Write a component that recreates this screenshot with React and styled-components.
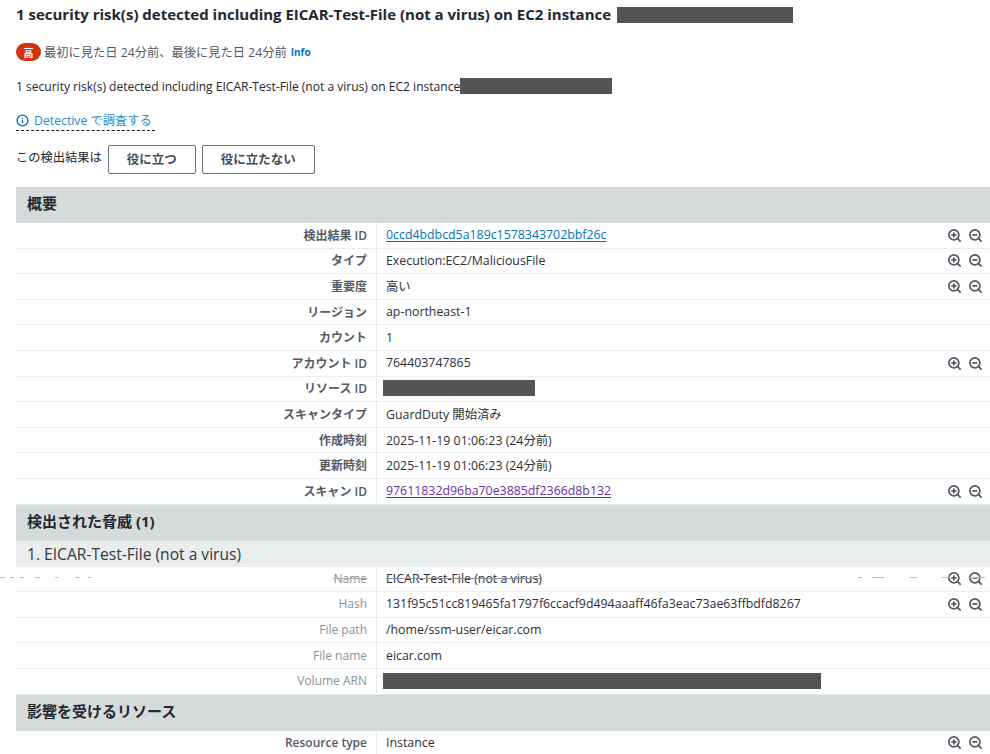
import styled, { createGlobalStyle } from "styled-components";
import { ZoomIn, ZoomOut, Info } from "lucide-react";

const GlobalStyle = createGlobalStyle`
  html, body {
    margin: 0;
    height: 754px;
    overflow: hidden;
    background: #fff;
  }
  body {
    font-family: "Open Sans", "Noto Sans CJK JP", sans-serif;
    color: #16191f;
  }
`;

const Page = styled.div`
  width: 990px;
  height: 754px;
  padding-left: 16px;
  box-sizing: border-box;
  overflow: hidden;
  position: relative;
`;

const Title = styled.h1`
  margin: 0;
  height: 29px;
  box-sizing: border-box;
  font-size: 15px;
  line-height: 19px;
  font-weight: 700;
  color: #232730;
  display: flex;
  align-items: center;
  gap: 6px;
  white-space: nowrap;
`;

const Redacted = styled.span`
  display: inline-block;
  width: ${(p) => p.$w}px;
  height: 16px;
  margin-left: ${(p) => p.$ml || 0}px;
  background: #545454;
  flex: none;
`;

const MetaLine = styled.div`
  margin-top: 13px;
  height: 20px;
  display: flex;
  align-items: center;
  font-size: 12.25px;
  color: #545b64;
`;

const Badge = styled.span`
  width: 25px;
  height: 18px;
  border-radius: 9px;
  background: #d13212;
  color: #fff;
  font-size: 10px;
  font-weight: 700;
  display: flex;
  align-items: center;
  justify-content: center;
  margin-right: 3px;
`;

const InfoLink = styled.span`
  color: #0073bb;
  font-size: 10px;
  font-weight: 700;
  margin-left: 4px;
`;

const Description = styled.div`
  margin-top: 15px;
  height: 18px;
  display: flex;
  align-items: center;
  font-size: 12.05px;
  color: #232730;
  white-space: nowrap;
`;

const DetectiveLink = styled.div`
  margin-top: 15px;
  width: 139px;
  height: 20px;
  border-bottom: 1px dashed #16191f;
  display: flex;
  align-items: center;
  gap: 5px;
  color: #2b8ac6;
  font-size: 12.25px;
  white-space: nowrap;
`;

const FeedbackRow = styled.div`
  margin-top: 14px;
  display: flex;
  align-items: center;
  gap: 6px;
  font-size: 12.25px;
  color: #232730;
`;

const FeedbackLabel = styled.span`
  margin-top: -6px;
`;

const FeedbackButton = styled.button`
  height: 29px;
  width: ${(p) => p.$w}px;
  padding: 0 0 3px;
  background: #fff;
  border: 1px solid #687078;
  border-radius: 2px;
  font-family: inherit;
  font-size: 12.5px;
  font-weight: 600;
  color: #444b55;
`;

const SectionHeader = styled.div`
  height: 36px;
  margin-top: ${(p) => p.$mt || 0}px;
  padding: 0 0 5px 11px;
  box-sizing: border-box;
  background: #d5dbdb;
  display: flex;
  align-items: center;
  font-size: 15px;
  font-weight: 700;
  color: #232730;
`;

const SubHeader = styled.div`
  height: 26px;
  background: #eaeded;
  display: flex;
  align-items: center;
  padding-left: 11px;
  box-sizing: border-box;
  font-size: 15.6px;
  color: #33383f;
`;

const Row = styled.div`
  display: grid;
  grid-template-columns: 361px 1fr 43px;
  height: 25.6px;
  box-sizing: border-box;
  border-bottom: 1px solid #eaeded;
  font-size: 12.35px;
  position: relative;
`;

const Label = styled.div`
  display: flex;
  align-items: center;
  justify-content: flex-end;
  padding: 0 9px 1px 0;
  font-size: 12px;
  font-weight: ${(p) => (p.$light ? 400 : 600)};
  color: ${(p) => (p.$light ? "#879596" : "#545b64")};
  border-right: 1px solid #eaeded;
  text-decoration: ${(p) => (p.$struck ? "line-through #a9aeb3" : "none")};
`;

const Value = styled.div`
  display: flex;
  align-items: center;
  padding: 0 0 1px 9px;
  color: #2b3038;
  white-space: nowrap;
  text-decoration: ${(p) => (p.$struck ? "line-through #8a9096" : "none")};
`;

const BlueLink = styled.span`
  color: ${(p) => (p.$visited ? "#6b2fa0" : "#0073bb")};
  text-decoration: underline;
  text-underline-offset: 2px;
`;

const Actions = styled.div`
  display: flex;
  align-items: center;
  gap: 6px;
  color: #545b64;
`;

// green dashes left across the Name row by the screen capture
const GlitchDash = styled.div`
  position: absolute;
  left: ${(p) => p.$left}px;
  top: 10px;
  width: ${(p) => p.$w}px;
  height: 1px;
  background: #6dfa5a;
`;

const ROWS = [
  { label: "検出結果 ID", value: <BlueLink>0ccd4bdbcd5a189c1578343702bbf26c</BlueLink>, zoom: true },
  { label: "タイプ", value: "Execution:EC2/MaliciousFile", zoom: true },
  { label: "重要度", value: "高い", zoom: true },
  { label: "リージョン", value: "ap-northeast-1" },
  { label: "カウント", value: "1" },
  { label: "アカウント ID", value: "764403747865", zoom: true },
  { label: "リソース ID", value: <Redacted $w={152} $ml={-3} /> },
  { label: "スキャンタイプ", value: "GuardDuty 開始済み" },
  { label: "作成時刻", value: "2025-11-19 01:06:23 (24分前)" },
  { label: "更新時刻", value: "2025-11-19 01:06:23 (24分前)" },
  { label: "スキャン ID", value: <BlueLink $visited>97611832d96ba70e3885df2366d8b132</BlueLink>, zoom: true },
];

const THREAT_ROWS = [
  { label: "Hash", value: "131f95c51cc819465fa1797f6ccacf9d494aaaff46fa3eac73ae63ffbdfd8267", zoom: true },
  { label: "File path", value: "/home/ssm-user/eicar.com" },
  { label: "File name", value: "eicar.com" },
  { label: "Volume ARN", value: <Redacted $w={438} $ml={-3} /> },
];

const DASHES = [
  [-16, 5], [-6, 4], [4, 4], [19, 5], [39, 3], [59, 4], [72, 3],
  [842, 4], [856, 12], [894, 7], [926, 8], [952, 17],
];

const ZoomIcons = () => (
  <Actions>
    <ZoomIn size={15} strokeWidth={2.8} />
    <ZoomOut size={15} strokeWidth={2.8} />
  </Actions>
);

const DetailRow = ({ label, value, zoom, light }) => (
  <Row>
    <Label $light={light}>{label}</Label>
    <Value>{value}</Value>
    {zoom ? <ZoomIcons /> : <div />}
  </Row>
);

export default function App() {
  return (
    <Page>
      <GlobalStyle />
      <Title>
        1 security risk(s) detected including EICAR-Test-File (not a virus) on EC2 instance
        <Redacted $w={176} />
      </Title>
      <MetaLine>
        <Badge>高</Badge>
        最初に見た日 24分前、最後に見た日 24分前
        <InfoLink>Info</InfoLink>
      </MetaLine>
      <Description>
        1 security risk(s) detected including EICAR-Test-File (not a virus) on EC2 instance
        <Redacted $w={152} />
      </Description>
      <DetectiveLink>
        <Info size={13} strokeWidth={2.4} color="#0073bb" />
        Detective で調査する
      </DetectiveLink>
      <FeedbackRow>
        <FeedbackLabel>この検出結果は</FeedbackLabel>
        <FeedbackButton $w={88}>役に立つ</FeedbackButton>
        <FeedbackButton $w={113}>役に立たない</FeedbackButton>
      </FeedbackRow>

      <SectionHeader $mt={13}>概要</SectionHeader>
      {ROWS.map((r) => (
        <DetailRow key={r.label} {...r} />
      ))}

      <SectionHeader>検出された脅威 (1)</SectionHeader>
      <SubHeader>1. EICAR-Test-File (not a virus)</SubHeader>
      <Row>
        <Label $light $struck>Name</Label>
        <Value $struck>EICAR-Test-File (not a virus)</Value>
        <ZoomIcons />
        {DASHES.map(([left, w]) => (
          <GlitchDash key={left} $left={left} $w={w} />
        ))}
      </Row>
      {THREAT_ROWS.map((r) => (
        <DetailRow key={r.label} {...r} light />
      ))}

      <SectionHeader>影響を受けるリソース</SectionHeader>
      <DetailRow label="Resource type" value="Instance" zoom />
    </Page>
  );
}
